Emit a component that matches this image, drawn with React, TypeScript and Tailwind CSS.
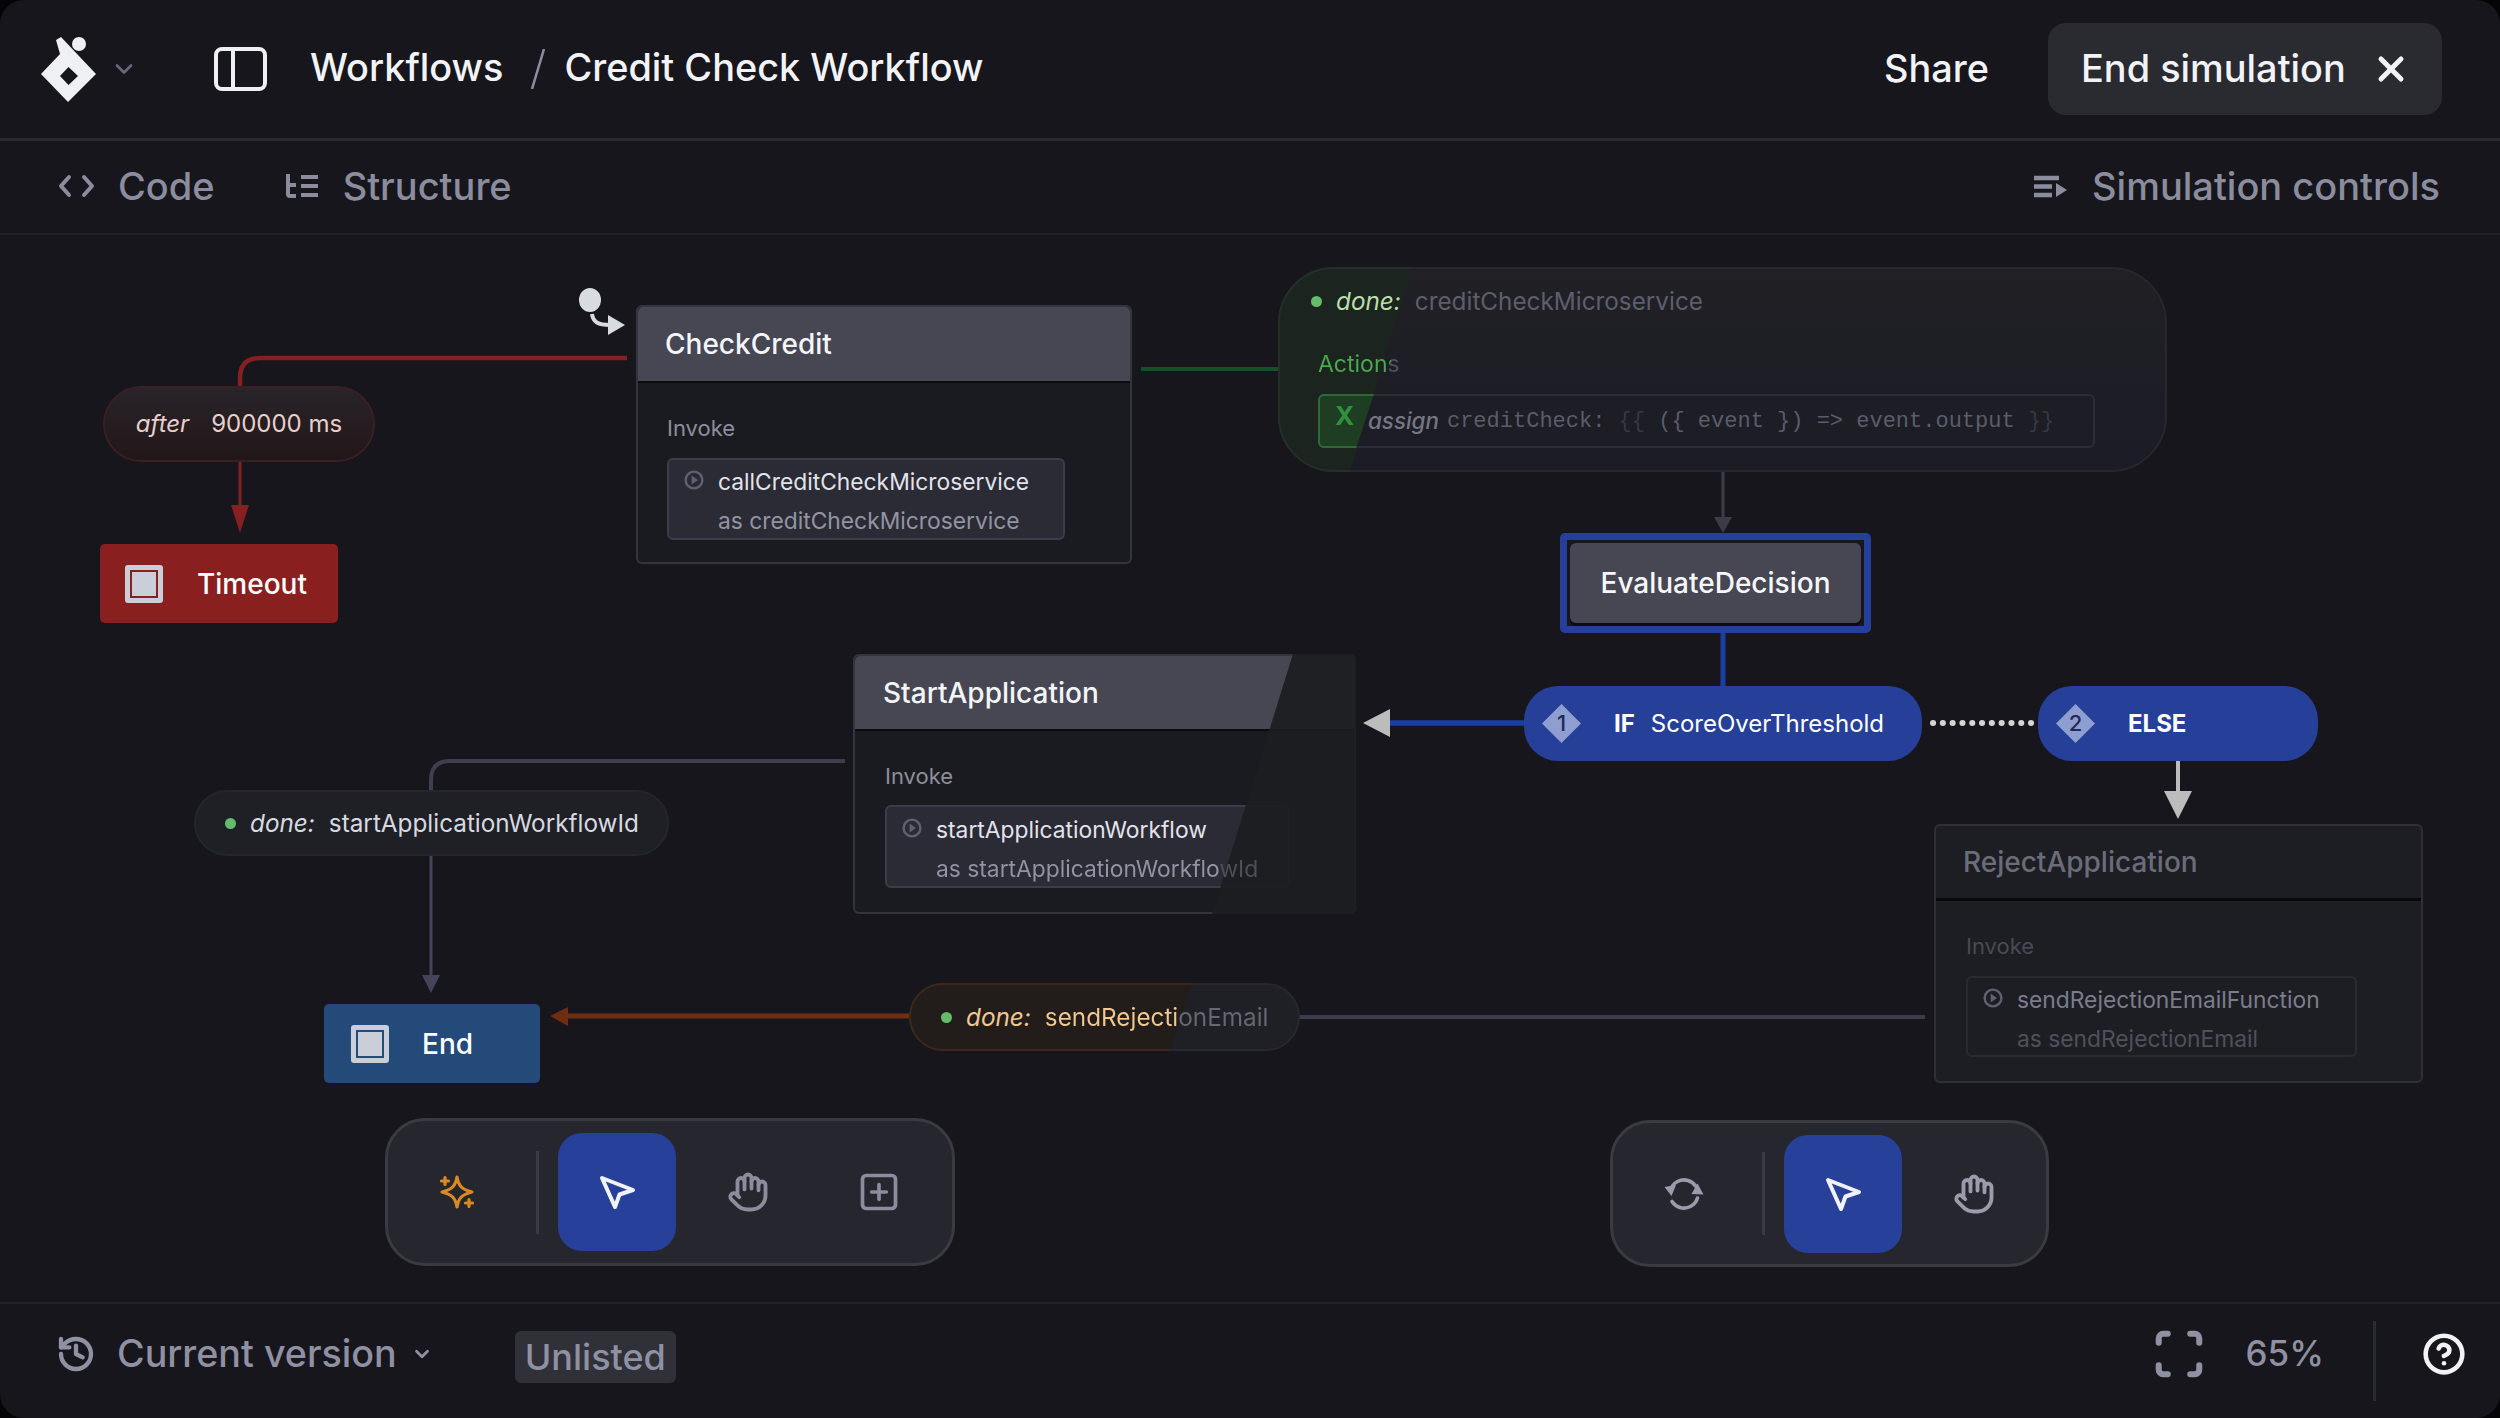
import React from 'react';
import { ChevronDown, CircleHelp, Hand, History, Scan, SquarePlus, X } from 'lucide-react';

const SANS = "font-['Inter',sans-serif]";

function PlayIcon({ className }: { className: string }) {
  return (
    <svg viewBox="0 0 20 20" className={`h-[20px] w-[20px] shrink-0 ${className}`} fill="none">
      <circle cx="10" cy="10" r="8.4" stroke="currentColor" strokeWidth="2.4" />
      <path d="M7.6 5.4 L14 10 L7.6 14.6 Z" fill="currentColor" />
    </svg>
  );
}

function FinalIcon() {
  return (
    <span className="flex h-[38px] w-[38px] shrink-0 items-center justify-center rounded-[3px] border-[5px] border-[#c9ced8] p-[2px]">
      <span className="h-full w-full bg-[#c9ced8]" />
    </span>
  );
}

function Dot() {
  return <span className="h-[11px] w-[11px] shrink-0 rounded-full bg-[#64bb6a]" />;
}

function Pointer() {
  return (
    <svg viewBox="0 0 40 40" className="h-10 w-10" fill="none" stroke="#f1f2f6" strokeWidth="4" strokeLinejoin="round">
      <path d="M5 6 L36 18 L22.5 22.5 L18 35 Z" />
    </svg>
  );
}

function Sparkle() {
  return (
    <svg viewBox="0 0 36 36" className="h-9 w-9" fill="none" stroke="#d98a22" strokeWidth="3.2" strokeLinecap="round" strokeLinejoin="round">
      <path d="M18 3 C19.5 11.5 22.5 15.5 33 18 C22.5 20.5 19.5 24.5 18 33 C16.5 24.5 13.5 20.5 3 18 C13.5 15.5 16.5 11.5 18 3 Z" />
      <path d="M6 3.5 V10.5 M2.5 7 H9.5" />
      <path d="M30 25.5 V32.5 M26.5 29 H33.5" />
    </svg>
  );
}

function Refresh() {
  return (
    <svg viewBox="0 0 40 40" className="h-10 w-10 text-[#9a9cab]" fill="none" stroke="currentColor" strokeWidth="3.6" strokeLinecap="round">
      <path d="M6.5 16 C9 8 17 4.5 24 6.5 C27.5 7.5 30 9.5 32 12.5" />
      <path d="M33.5 24 C31 32 23 35.5 16 33.5 C12.5 32.5 10 30.5 8 27.5" />
      <path d="M0.5 13 L12 11 L7.5 22 Z" fill="currentColor" strokeWidth="0" />
      <path d="M39.5 20.5 L27.5 20 L33.5 9.5 Z" fill="currentColor" strokeWidth="0" />
    </svg>
  );
}

function Edges() {
  return (
    <svg viewBox="0 0 2500 1418" className="absolute left-0 top-[-235px] h-[1418px] w-[2500px]" fill="none">
      {/* start marker */}
      <ellipse cx="590" cy="300" rx="11" ry="12" fill="#d8dbe2" />
      <path d="M592 314 C593 322 598 325 610 325" stroke="#d8dbe2" strokeWidth="4" />
      <path d="M608 315 L625 325 L608 335 Z" fill="#d8dbe2" />
      {/* after -> Timeout */}
      <path d="M627 358 H260 Q240 358 240 378 V386" stroke="#84201f" strokeWidth="4.5" />
      <path d="M240 462 V510" stroke="#84201f" strokeWidth="3" />
      <path d="M231 505 H249 L240 533 Z" fill="#84201f" />
      {/* CheckCredit -> done */}
      <path d="M1141 369 H1280" stroke="#15502a" strokeWidth="4" />
      <path d="M1723 472 V520" stroke="#3b3c48" strokeWidth="3" />
      <path d="M1714 517 H1732 L1723 533 Z" fill="#3b3c48" />
      {/* EvaluateDecision -> guards */}
      <path d="M1723 633 V690" stroke="#1a3fa3" strokeWidth="5" />
      <path d="M1390 723 H1526" stroke="#1a3fa3" strokeWidth="5.5" />
      <path d="M1390 709 V737 L1363 723 Z" fill="#bcbcbc" />
      <path d="M1933 723 H2038" stroke="#d5d5d8" strokeWidth="6" strokeDasharray="0.1 9.7" strokeLinecap="round" />
      <path d="M2178 761 V795" stroke="#bcbcbc" strokeWidth="4" />
      <path d="M2164 791 H2192 L2178 819 Z" fill="#bcbcbc" />
      {/* StartApplication -> End */}
      <path d="M845 761 H450 Q431 761 431 780 V790" stroke="#3e3f4d" strokeWidth="4" />
      <path d="M431 856 V980" stroke="#43445a" strokeWidth="3" />
      <path d="M422 975 H440 L431 993 Z" fill="#43445a" />
      {/* RejectApplication -> End */}
      <path d="M1925 1017 H1298" stroke="#3c3d49" strokeWidth="4" />
      <path d="M566 1016 H911" stroke="#6e2e12" strokeWidth="5" />
      <path d="M568 1007 V1026 L550 1016 Z" fill="#6e2e12" />
    </svg>
  );
}

function InvokeBox({
  name,
  alias,
  className,
  nameClass,
  aliasClass,
  iconClass,
}: {
  name: string;
  alias: string;
  className: string;
  nameClass: string;
  aliasClass: string;
  iconClass: string;
}) {
  return (
    <div className={`flex gap-[14px] rounded-[6px] border-2 pl-[15px] pt-[9px] ${className}`}>
      <PlayIcon className={`mt-[1px] ${iconClass}`} />
      <div className="flex flex-col gap-[13px] text-[22.8px] leading-[26px]">
        <span className={nameClass}>{name}</span>
        <span className={aliasClass}>{alias}</span>
      </div>
    </div>
  );
}

function ToolButton({ active, children }: { active?: boolean; children: React.ReactNode }) {
  return (
    <div className={`flex h-[118px] w-[118px] items-center justify-center rounded-[24px] ${active ? 'bg-[#27419a]' : ''}`}>
      {children}
    </div>
  );
}

function Canvas() {
  return (
    <div className="relative flex-1">
      <Edges />

      {/* CheckCredit */}
      <div className="absolute left-[636px] top-[70px] h-[259px] w-[496px] rounded-[6px] border-2 border-[#33343e] bg-[#1a1b20]">
        <div className="flex h-[76px] items-center rounded-t-[5px] border-b-2 border-[#0c0c0f] bg-[#464753] pl-[27px] text-[28px] font-medium text-[#f4f5f8]">
          CheckCredit
        </div>
        <div className="px-[29px] pt-[32px]">
          <div className="text-[22px] leading-[26px] text-[#8d8e9c]">Invoke</div>
          <InvokeBox
            name="callCreditCheckMicroservice"
            alias="as creditCheckMicroservice"
            className="mt-[17px] h-[82px] w-[398px] border-[#3c3d4a] bg-[#2a2b35]"
            nameClass="text-[#e2e3ea]"
            aliasClass="text-[#9394a3]"
            iconClass="text-[#5f6072]"
          />
        </div>
      </div>

      {/* after */}
      <div className="absolute left-[103px] top-[151px] flex h-[76px] w-[272px] items-start justify-center gap-[22px] rounded-full border-2 border-[#3a1f23] bg-gradient-to-b from-[#28242a] to-[#221618] pt-[22px] text-[24px] leading-[28px] text-[#e8cfc9]">
        <span className="italic">after</span>
        <span>900000 ms</span>
      </div>

      {/* Timeout */}
      <div className="absolute left-[100px] top-[309px] flex h-[79px] w-[238px] items-center gap-[34px] rounded-[5px] bg-[#8a1f20] pl-[25px] text-[28px] font-medium text-white">
        <FinalIcon />
        <span>Timeout</span>
      </div>

      {/* done: creditCheckMicroservice */}
      <div className="absolute left-[1278px] top-[32px] h-[205px] w-[889px] rounded-[56px] border-2 border-[#27282e] bg-gradient-to-b from-[#202025] to-[#1b1c25]">
        <div className="absolute inset-[-2px] rounded-[56px] border-2 border-[#232f28] bg-[#1c2420] [clip-path:polygon(0_0,135px_0,72px_100%,0_100%)]" />
        <div className="relative flex items-center pl-[31px] pt-[18px] text-[24.3px] leading-[28px]">
          <Dot />
          <span className="ml-[14px] italic text-[#b9dfa8]">done:</span>
          <span className="ml-[14px] text-[#5d5e6c]">creditCheckMicroservice</span>
        </div>
        <div className="relative ml-[38px] mt-[36px] w-fit bg-[linear-gradient(100deg,#4ba94f_86%,#4f505c_86%)] bg-clip-text text-[23px] leading-[26px] text-transparent">
          Actions
        </div>
        <div className="relative ml-[38px] mt-[17px] flex h-[54px] w-[777px] items-center rounded-[6px] border-2 border-[#2b2c34] text-[#5b5c69]">
          <div className="absolute inset-[-2px] rounded-[6px] border-2 border-[#2e6b34] bg-[#1f3d22] [clip-path:polygon(0_0,56px_0,38px_100%,0_100%)]" />
          <span className="relative ml-[15px] mt-[-10px] w-[20px] text-[26px] font-bold leading-[30px] text-[#2f9140]">X</span>
          <span className="relative ml-[13px] text-[22.4px] font-medium italic text-[#757684]">assign</span>
          <span className="relative ml-[8px] whitespace-pre font-['Liberation_Mono',monospace] text-[22px]">
            creditCheck: <span className="text-[#373842]">{'{{'}</span> {'({ event }) => event.output'} <span className="text-[#373842]">{'}}'}</span>
          </span>
        </div>
      </div>

      {/* EvaluateDecision */}
      <div className="absolute left-[1560px] top-[298px] flex h-[100px] w-[311px] items-center justify-center rounded-[5px] border-[7px] border-[#263f9a] bg-[#17171e] p-[3px]">
        <div className="flex h-full w-full items-center justify-center rounded-[6px] bg-[#464753] text-[28px] font-medium text-[#f6f7fa] shadow-[0_3px_0_#0b0b0e]">
          EvaluateDecision
        </div>
      </div>

      {/* guards */}
      <div className="absolute left-[1524px] top-[451px] flex h-[75px] w-[398px] items-center rounded-[34px] bg-[#263f99] pl-[18px] text-[24px] text-white">
        <div className="relative flex h-[39px] w-[39px] items-center justify-center font-medium text-[#1f2a55]">
          <span className="absolute h-[39px] w-[39px] bg-[#8f9ed1] [clip-path:polygon(50%_0,100%_50%,50%_100%,0_50%)]" />
          <span className="relative text-[22px]">1</span>
        </div>
        <span className="ml-[33px] font-bold">IF</span>
        <span className="ml-[16px]">ScoreOverThreshold</span>
      </div>
      <div className="absolute left-[2038px] top-[451px] flex h-[75px] w-[280px] items-center rounded-[34px] bg-[#263f99] pl-[18px] text-[24px] text-white">
        <div className="relative flex h-[39px] w-[39px] items-center justify-center font-medium text-[#1f2a55]">
          <span className="absolute h-[39px] w-[39px] bg-[#8f9ed1] [clip-path:polygon(50%_0,100%_50%,50%_100%,0_50%)]" />
          <span className="relative text-[22px]">2</span>
        </div>
        <span className="ml-[33px] font-bold">ELSE</span>
      </div>

      {/* RejectApplication */}
      <div className="absolute left-[1934px] top-[589px] h-[259px] w-[489px] rounded-[6px] border-2 border-[#2f3037] bg-[#1d1e23]">
        <div className="flex h-[75px] items-center border-b-[3px] border-[#08080a] pl-[27px] text-[28px] font-medium text-[#6b6c7a]">
          RejectApplication
        </div>
        <div className="px-[30px] pt-[32px]">
          <div className="text-[22px] leading-[26px] text-[#484954]">Invoke</div>
          <InvokeBox
            name="sendRejectionEmailFunction"
            alias="as sendRejectionEmail"
            className="mt-[17px] h-[81px] w-[391px] border-[#2a2b32]"
            nameClass="text-[#7c7d8b]"
            aliasClass="text-[#4f505b]"
            iconClass="text-[#5f6072]"
          />
        </div>
      </div>

      {/* StartApplication */}
      <div className="absolute left-[853px] top-[419px] h-[260px] w-[503px] rounded-[6px] border-2 border-[#33343e] bg-[#1a1b20]">
        <div className="flex h-[75px] items-center rounded-t-[5px] border-b-2 border-[#0c0c0f] bg-[#464753] pl-[28px] text-[28px] font-medium text-[#f4f5f8]">
          StartApplication
        </div>
        <div className="px-[30px] pt-[32px]">
          <div className="text-[22px] leading-[26px] text-[#8d8e9c]">Invoke</div>
          <InvokeBox
            name="startApplicationWorkflow"
            alias="as startApplicationWorkflowId"
            className="mt-[16px] h-[83px] w-[405px] border-[#3c3d4a] bg-[#2a2b35] pt-[10px]"
            nameClass="text-[#e2e3ea]"
            aliasClass="relative z-20 bg-[linear-gradient(90deg,#9394a3_88%,#4e4f5a_88%)] bg-clip-text text-transparent"
            iconClass="text-[#5f6072]"
          />
        </div>
        <div className="absolute inset-[-2px] z-10 rounded-[6px] bg-[#1c1d21]/92 [clip-path:polygon(440px_0,100%_0,100%_100%,359px_100%)]" />
      </div>

      {/* done: startApplicationWorkflowId */}
      <div className="absolute left-[194px] top-[555px] flex h-[66px] w-[475px] items-center rounded-full border-2 border-[#25262b] bg-[#1f2025] pl-[29px] text-[24.3px] text-[#d8d9e0]">
        <Dot />
        <span className="ml-[14px] italic">done:</span>
        <span className="ml-[14px]">startApplicationWorkflowId</span>
      </div>

      {/* End */}
      <div className="absolute left-[324px] top-[769px] flex h-[79px] w-[216px] items-center gap-[33px] rounded-[5px] bg-[#234a78] pl-[27px] text-[28px] font-medium text-white">
        <FinalIcon />
        <span>End</span>
      </div>

      {/* done: sendRejectionEmail */}
      <div className="absolute left-[909px] top-[748px] h-[68px] w-[391px] rounded-full border-2 border-[#27282e] bg-[#1f2025]">
        <div className="absolute inset-[-2px] rounded-full border-2 border-[#3d2818] bg-[#221c1b] [clip-path:polygon(0_0,283px_0,261px_100%,0_100%)]" />
        <div className="relative flex h-full items-center pl-[30px] text-[24.3px]">
          <Dot />
          <span className="ml-[14px] italic text-[#f0c890]">done:</span>
          <span className="ml-[14px] bg-[linear-gradient(90deg,#f0c890_60%,#666774_60%)] bg-clip-text text-transparent">
            sendRejectionEmail
          </span>
        </div>
      </div>

      {/* design toolbar */}
      <div className="absolute left-[385px] top-[883px] flex h-[148px] w-[570px] items-center rounded-[40px] border-[3px] border-[#3a3a41] bg-[#26262e]">
        <div className="flex w-[148px] items-center justify-center pr-[10px]">
          <Sparkle />
        </div>
        <div className="h-[83px] w-[3px] bg-[#3a3a41]" />
        <div className="ml-[19px] flex items-center gap-[13px]">
          <ToolButton active>
            <Pointer />
          </ToolButton>
          <ToolButton>
            <Hand size={42} strokeWidth={2.2} className="text-[#8b8d9c]" />
          </ToolButton>
          <ToolButton>
            <SquarePlus size={44} strokeWidth={2} className="text-[#8b8d9c]" />
          </ToolButton>
        </div>
      </div>

      {/* simulation toolbar */}
      <div className="absolute left-[1610px] top-[885px] flex h-[147px] w-[439px] items-center rounded-[40px] border-[3px] border-[#3a3a41] bg-[#26262e]">
        <div className="flex w-[149px] items-center justify-center pr-[7px]">
          <Refresh />
        </div>
        <div className="h-[83px] w-[3px] bg-[#3a3a41]" />
        <div className="ml-[19px]">
          <ToolButton active>
            <Pointer />
          </ToolButton>
        </div>
        <div className="ml-[13px]">
          <ToolButton>
            <Hand size={42} strokeWidth={2.2} className="text-[#9a9cab]" />
          </ToolButton>
        </div>
      </div>
    </div>
  );
}

export default function App() {
  return (
    <div className="h-[1418px] w-[2500px] overflow-hidden bg-[#050507]">
      <div className={`flex h-[1418px] w-[2500px] flex-col overflow-hidden rounded-[24px] bg-[#16161c] ${SANS}`}>
        {/* Top bar */}
        <header className="flex h-[141px] shrink-0 items-center border-b-[3px] border-[#2a2b30] pl-[41px] pr-[58px] text-[37.9px] font-medium text-[#f2f3f6]">
          <svg viewBox="41 37 55 65" className="h-[65px] w-[55px]" fill="#eff0f3">
            <path fillRule="evenodd" d="M56 40 L61 37 L96 74 L68 102 L41 74 L60 54 Z M68.5 67 L60 76 L68.5 85 L78 76 Z" />
            <circle cx="79" cy="44" r="7" />
          </svg>
          <ChevronDown size={28} strokeWidth={2.4} className="ml-[14px] text-[#666878]" />
          <svg viewBox="0 0 53 44" className="ml-[76px] h-[44px] w-[53px]" fill="none" stroke="#eff0f3" strokeWidth="4">
            <rect x="2" y="2" width="49" height="40" rx="6" />
            <path d="M19 2 V42" />
          </svg>
          <span className="ml-[43px] pb-[3px]">Workflows</span>
          <svg viewBox="0 0 14 40" className="ml-[28px] h-[40px] w-[14px]" stroke="#8b8d9e" strokeWidth="2.5">
            <path d="M13 0 L1 40" />
          </svg>
          <span className="ml-[19px] pb-[3px]">Credit Check Workflow</span>
          <span className="ml-auto pb-[2px]">Share</span>
          <div className="ml-[59px] flex h-[92px] w-[394px] items-center rounded-[18px] bg-[#2a2a31] pl-[33px]">
            <span className="pb-[2px]">End simulation</span>
            <X size={40} strokeWidth={3} className="ml-[25px]" />
          </div>
        </header>

        {/* Tabs */}
        <div className="flex h-[94px] shrink-0 items-center border-b-2 border-[#212228] pb-[2px] pl-[58px] pr-[60px] text-[38px] font-medium text-[#8b8d9e]">
          <svg viewBox="0 0 37 24" className="h-[24px] w-[37px]" fill="none" stroke="currentColor" strokeWidth="4" strokeLinecap="round" strokeLinejoin="round">
            <path d="M11 3 L3 12 L11 21 M26 3 L34 12 L26 21" />
          </svg>
          <span className="ml-[23px]">Code</span>
          <svg viewBox="0 0 33 24" className="ml-[70px] h-[24px] w-[33px]" fill="none" stroke="currentColor" strokeWidth="4">
            <path d="M3 0 V20 Q3 22 5 22 H11 M3 11 H11 M16 3 H33 M16 12 H33 M16 21 H33" />
          </svg>
          <span className="ml-[25px]">Structure</span>
          <svg viewBox="0 0 33 23" className="ml-auto h-[23px] w-[33px]" fill="none">
            <path d="M0 3 H25 M0 11.5 H18 M0 20 H18" stroke="currentColor" strokeWidth="4.5" />
            <path d="M22 8 L33 15 L22 22 Z" fill="currentColor" />
          </svg>
          <span className="ml-[25px]">Simulation controls</span>
        </div>

        <Canvas />

        {/* Footer */}
        <footer className="flex h-[116px] shrink-0 items-center border-t-2 border-[#212228] pb-[15px] pl-[56px] pr-[34px] text-[37.7px] font-medium text-[#8f90a2]">
          <History size={40} strokeWidth={2.6} />
          <span className="ml-[21px]">Current version</span>
          <ChevronDown size={22} strokeWidth={3} className="ml-[14px]" />
          <span className="ml-[82px] mt-[6px] flex h-[52px] w-[161px] items-center justify-center rounded-[6px] bg-[#303138] text-[36px]">Unlisted</span>
          <Scan size={54} strokeWidth={2.7} className="ml-auto" />
          <span className="ml-[40px] text-[35px]">65%</span>
          <div className="ml-[49px] mt-[15px] h-[80px] w-[3px] bg-[#2a2b30]" />
          <CircleHelp size={44} strokeWidth={2.5} className="ml-[46px] text-[#f2f3f6]" />
        </footer>
      </div>
    </div>
  );
}
